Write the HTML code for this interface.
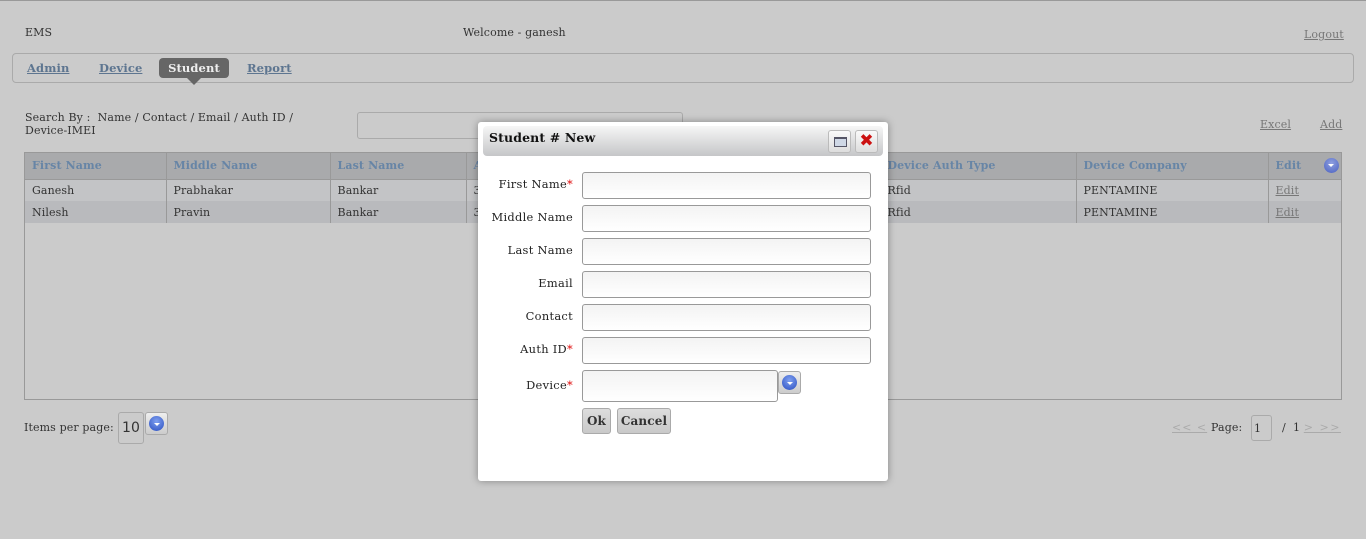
<!DOCTYPE html>
<html><head><style>
*{margin:0;padding:0;box-sizing:border-box}
body{width:1366px;height:539px;background:#cbcbcb;font-family:"DejaVu Serif","Liberation Serif",serif;font-size:11px;letter-spacing:0.12px;color:#333;position:relative;overflow:hidden}
.a{position:absolute;white-space:nowrap}
.lnk{color:#5d7590;text-decoration:underline;font-weight:bold;font-size:11.5px}
.ul{text-decoration:underline;color:#777}
th,td{text-align:left;padding-left:7px;border-right:1px solid #999}
th{color:#6785a6;font-weight:bold;height:26px;background:#a9aaac;border-bottom:1px solid #999}
td{height:22px}
.inp{position:absolute;left:582px;width:289px;height:27px;border:1px solid #999;border-radius:3px;background:linear-gradient(#f3f3f3,#fff)}
.lb{position:absolute;right:0;width:95px;text-align:right;color:#222;font-size:11.4px;letter-spacing:0.3px}
.r{color:#d00}
.btn{position:absolute;height:26px;border:1px solid #aaa;border-radius:3px;background:linear-gradient(#ddd,#c9c9c9);font-weight:bold;font-size:12px;color:#333;text-align:center;line-height:24px}
.dd{position:absolute;width:23px;height:23px;border:1px solid #aaa;border-radius:3px;background:linear-gradient(#eee,#ccc)}
.dd:after{content:"";position:absolute;left:3px;top:3px;width:15px;height:15px;border-radius:50%;background:radial-gradient(circle at 50% 35%,#7fa0f0,#2a4ec0)}
.dd i{position:absolute;left:8px;top:10px;width:0;height:0;border-left:3px solid transparent;border-right:3px solid transparent;border-top:3px solid #fff;z-index:2}
</style></head><body>
<div class="a" style="left:0;top:0;width:1366px;height:3px;border-top:1px solid #999"></div>
<div class="a" style="left:25px;top:26px">EMS</div>
<div class="a" style="left:463px;top:26px">Welcome - ganesh</div>
<div class="a ul" style="left:1304px;top:28px">Logout</div>
<div class="a" style="left:12px;top:53px;width:1342px;height:30px;border:1px solid #aaa;border-radius:4px"></div>
<div class="a lnk" style="left:27px;top:61px">Admin</div>
<div class="a lnk" style="left:99px;top:61px">Device</div>
<div class="a" style="left:159px;top:58px;width:70px;height:20px;background:#666;border-radius:4px;color:#eee;font-weight:bold;text-align:center;line-height:20px;font-size:11.5px">Student</div>
<div class="a" style="left:187px;top:78px;border-left:7px solid transparent;border-right:7px solid transparent;border-top:7px solid #666"></div>
<div class="a lnk" style="left:247px;top:61px">Report</div>
<div class="a" style="left:25px;top:111px;line-height:13px">Search By :&nbsp; Name / Contact / Email / Auth ID /<br>Device-IMEI</div>
<div class="a" style="left:357px;top:112px;width:326px;height:27px;border:1px solid #aaa;border-radius:3px"></div>
<div class="a ul" style="left:1260px;top:118px">Excel</div>
<div class="a ul" style="left:1320px;top:118px">Add</div>
<div class="a" style="left:24px;top:152px;width:1318px;height:248px;border:1px solid #999;background:#cbcbcb">
<table style="border-collapse:collapse;width:1316px">
<tr><th style="width:141px;height:25px">First Name</th><th style="width:164px">Middle Name</th><th style="width:136px">Last Name</th><th style="width:414px">A</th><th style="width:196px">Device Auth Type</th><th style="width:192px">Device Company</th><th style="border-right:none;position:relative">Edit<div class="a" style="right:2px;top:5px;width:15px;height:15px;border-radius:50%;background:radial-gradient(circle at 50% 35%,#8fa0e0,#4a60c0)"><div style="position:absolute;left:4px;top:6px;border-left:3px solid transparent;border-right:3px solid transparent;border-top:3px solid #fff"></div></div></th></tr>
<tr style="background:#c3c4c6"><td>Ganesh</td><td>Prabhakar</td><td>Bankar</td><td>3</td><td>Rfid</td><td>PENTAMINE</td><td style="border-right:none"><span class="ul">Edit</span></td></tr>
<tr style="background:#b9babd"><td>Nilesh</td><td>Pravin</td><td>Bankar</td><td>3</td><td>Rfid</td><td>PENTAMINE</td><td style="border-right:none"><span class="ul">Edit</span></td></tr>
</table></div>
<div class="a" style="left:24px;top:421px">Items per page:</div>
<div class="a" style="left:118px;top:412px;width:26px;height:32px;border:1px solid #aaa;border-radius:3px;font-family:'DejaVu Sans',sans-serif;font-size:14px;line-height:30px;text-align:center">10</div>
<div class="dd" style="left:145px;top:412px"><i></i></div>
<div class="a" style="left:1172px;top:421px;color:#aaa;text-decoration:underline;letter-spacing:1px">&lt;&lt; &lt;</div>
<div class="a" style="left:1211px;top:421px">Page:</div>
<div class="a" style="left:1251px;top:415px;width:21px;height:26px;border:1px solid #aaa;border-radius:3px;padding:6px 2px">1</div>
<div class="a" style="left:1282px;top:421px">/&nbsp;&nbsp;1 <span style="color:#aaa;text-decoration:underline;letter-spacing:1.5px">&gt; &gt;&gt;</span></div>
<!-- dialog -->
<div class="a" style="left:478px;top:122px;width:410px;height:359px;background:#fff;border-radius:3px;box-shadow:0 0 8px rgba(0,0,0,.35)">
<div class="a" style="left:5px;top:4px;width:400px;height:30px;border-radius:4px;background:linear-gradient(#f6f6f6,#c5c6c8);"></div>
<div class="a" style="left:11px;top:8px;font-weight:bold;font-size:12.5px;color:#111">Student # New</div>
<div class="a" style="left:350px;top:8px;width:23px;height:23px;border:1px solid #bbb;border-radius:3px;background:linear-gradient(#fafafa,#ddd)"><div style="position:absolute;left:5px;top:6px;width:13px;height:10px;border:1px solid #556;border-top-width:2px;background:#cfd8e6"></div></div>
<div class="a" style="left:377px;top:8px;width:23px;height:23px;border:1px solid #bbb;border-radius:3px;background:linear-gradient(#fafafa,#ddd);color:#c11;font-size:17px;font-weight:bold;text-align:center;line-height:21px;font-family:'DejaVu Sans',sans-serif">✖</div>
</div>
<div class="a" style="left:478px;top:122px;width:410px;height:359px">
<div class="a lb" style="left:0;top:55px">First Name<span class="r">*</span></div>
<div class="a lb" style="left:0;top:88px">Middle Name</div>
<div class="a lb" style="left:0;top:121px">Last Name</div>
<div class="a lb" style="left:0;top:154px">Email</div>
<div class="a lb" style="left:0;top:187px">Contact</div>
<div class="a lb" style="left:0;top:220px">Auth ID<span class="r">*</span></div>
<div class="a lb" style="left:0;top:256px">Device<span class="r">*</span></div>
</div>
<div class="inp" style="top:172px"></div>
<div class="inp" style="top:205px"></div>
<div class="inp" style="top:238px"></div>
<div class="inp" style="top:271px"></div>
<div class="inp" style="top:304px"></div>
<div class="inp" style="top:337px"></div>
<div class="inp" style="top:370px;width:196px;height:32px"></div>
<div class="dd" style="left:778px;top:371px"><i></i></div>
<div class="btn" style="left:582px;top:408px;width:29px">Ok</div>
<div class="btn" style="left:617px;top:408px;width:54px">Cancel</div>
</body></html>
